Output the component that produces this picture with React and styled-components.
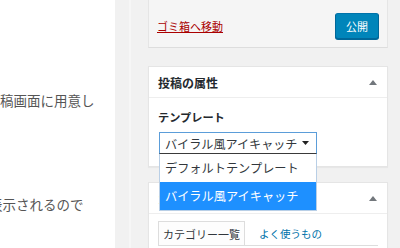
import React from 'react'
import styled, { createGlobalStyle } from 'styled-components'

const GlobalStyle = createGlobalStyle`
  html, body {
    margin: 0;
    padding: 0;
    background: #f1f1f1;
    font-family: "Noto Sans CJK JP", "Noto Sans", sans-serif;
  }
`

const Page = styled.div`
  display: flex;
  width: 400px;
  height: 248px;
  overflow: hidden;
`

const Content = styled.div`
  width: 115px;
  flex: none;
  background: #fff;
  overflow: hidden;
`

const Para = styled.p`
  margin: ${p => p.$top}px 0 0 ${p => p.$shift}px;
  font-size: 13.5px;
  line-height: 20px;
  color: #555;
  white-space: nowrap;
`

const Gutter = styled.div`
  width: 33px;
  flex: none;
  display: flex;
  .strip {
    margin-left: 14px;
    width: 2px;
    background: #f6f6f6;
  }
`

const Sidebar = styled.div`
  width: 240px;
  flex: none;
  display: flex;
  flex-direction: column;
  & > * {
    flex: none;
  }
`

const RightGutter = styled.div`
  flex: 1;
`

const PublishBox = styled.div`
  height: 48px;
  box-sizing: border-box;
  display: flex;
  align-items: center;
  justify-content: space-between;
  padding: 4px 8px 0 8px;
  background: #f5f5f5;
  border: 1px solid #e5e5e5;
  border-top: none;
  border-bottom-color: #ddd;
`

const TrashLink = styled.a`
  font-size: 11px;
  line-height: 16px;
  color: #a00;
  text-decoration: underline;
  text-underline-offset: 1px;
`

const PrimaryButton = styled.button`
  width: 44px;
  height: 26px;
  padding: 0;
  background: #0085ba;
  border: 1px solid #0073aa;
  border-color: #0073aa #006799 #006799;
  border-radius: 3px;
  box-shadow: 0 1px 0 #006799;
  color: #fff;
  font-family: inherit;
  font-size: 11px;
  line-height: 24px;
`

const Postbox = styled.div`
  margin-top: ${p => p.$gap}px;
  background: #fff;
  border: 1px solid #e5e5e5;
  box-shadow: 0 1px 1px rgba(0, 0, 0, 0.04);
`

const PostboxHeader = styled.div`
  height: 30px;
  display: flex;
  align-items: center;
  justify-content: space-between;
  padding: 0 10px 0 9px;
  border-bottom: 1px solid #eee;
  h2 {
    margin: 0;
    font-size: 12px;
    font-weight: 700;
    color: #23282d;
  }
`

const Inside = styled.div`
  padding: ${p => p.$pt}px 9px ${p => p.$pb}px;
`

const Label = styled.p`
  margin: 0 0 7px;
  font-size: 11.2px;
  font-weight: 700;
  line-height: 16px;
  color: #23282d;
`

const SelectWrap = styled.div`
  position: relative;
  width: 158px;
  margin-left: 1px;
`

const SelectBox = styled.div`
  height: 22px;
  box-sizing: border-box;
  display: flex;
  align-items: center;
  justify-content: space-between;
  padding: 0 7px 0 5px;
  border: 1px solid #5b9dd9;
  border-bottom-color: #3a3a3a;
  background: #fff;
  font-size: 12.1px;
  color: #32373c;
`

const Dropdown = styled.ul`
  position: absolute;
  top: 100%;
  left: 0;
  width: 100%;
  box-sizing: border-box;
  margin: 0;
  padding: 0;
  list-style: none;
  background: #fff;
  border: 1px solid #b9cfe6;
  border-top: none;
  z-index: 2;
`

const Option = styled.li`
  height: 28px;
  display: flex;
  align-items: center;
  padding-left: 5px;
  font-size: 12.2px;
  background: ${p => (p.$active ? '#1e90ff' : '#fff')};
  color: ${p => (p.$active ? '#fff' : '#32373c')};
`

const Tabs = styled.div`
  display: flex;
  align-items: flex-start;
  border-bottom: 1px solid #ddd;
`

const Tab = styled.div`
  height: 24px;
  box-sizing: border-box;
  padding: 3px 4px 0;
  border: 1px solid #ddd;
  border-bottom: none;
  background: #fdfdfd;
  font-size: 11px;
  line-height: 18px;
  color: #32373c;
`

const TabLink = styled.a`
  margin-left: 14px;
  padding-top: 4px;
  font-size: 10.5px;
  line-height: 18px;
  color: #0073aa;
`

const Toggle = () => (
  <svg width="8" height="5" viewBox="0 0 8 5">
    <path d="M0 5 L4 0 L8 5 Z" fill="#72777c" />
  </svg>
)

const Caret = () => (
  <svg width="7" height="4" viewBox="0 0 7 4">
    <path d="M0 0 L7 0 L3.5 4 Z" fill="#222" />
  </svg>
)

const App = () => {
  const options = ['デフォルトテンプレート', 'バイラル風アイキャッチ']

  return (
    <>
      <GlobalStyle />
      <Page>
        <Content>
          <Para $top={90} $shift={0}>稿画面に用意し</Para>
          <Para $top={84} $shift={-11}>表示されるので</Para>
        </Content>
        <Gutter>
          <div className='strip' />
        </Gutter>
        <Sidebar>
          <PublishBox>
            <TrashLink>ゴミ箱へ移動</TrashLink>
            <PrimaryButton>公開</PrimaryButton>
          </PublishBox>

          <Postbox $gap={18}>
            <PostboxHeader>
              <h2>投稿の属性</h2>
              <Toggle />
            </PostboxHeader>
            <Inside $pt={11} $pb={12}>
              <Label>テンプレート</Label>
              <SelectWrap>
                <SelectBox>
                  <span>バイラル風アイキャッチ</span>
                  <Caret />
                </SelectBox>
                <Dropdown>
                  {options.map((o, i) => (
                    <Option key={i} $active={i === 1}>{o}</Option>
                  ))}
                </Dropdown>
              </SelectWrap>
            </Inside>
          </Postbox>

          <Postbox $gap={15}>
            <PostboxHeader>
              <h2>カテゴリー</h2>
              <Toggle />
            </PostboxHeader>
            <Inside $pt={7} $pb={10}>
              <Tabs>
                <Tab>カテゴリー一覧</Tab>
                <TabLink>よく使うもの</TabLink>
              </Tabs>
            </Inside>
          </Postbox>
        </Sidebar>
        <RightGutter />
      </Page>
    </>
  )
}

export default App
